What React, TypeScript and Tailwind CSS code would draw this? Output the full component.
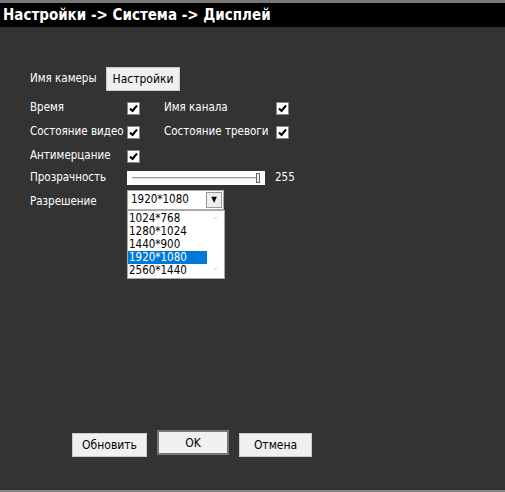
const Check = () => (
  <span className="flex h-[13px] w-[13px] items-center justify-center border border-[#888] bg-white">
    <svg width="9" height="9" viewBox="0 0 9 9">
      <path d="M1 4.5 L3.5 7 L8 1.5" stroke="#000" strokeWidth="2" fill="none" />
    </svg>
  </span>
);

const Btn = ({ label, w, strong }: { label: string; w: string; strong?: boolean }) => (
  <button
    className={`flex ${strong ? "h-[25px] -mt-[3px]" : "h-[24px]"} ${w} items-center justify-center bg-[#f0f0f0] text-[12px] text-black ${strong ? "border-2 border-[#777]" : "border border-[#ccc]"}`}
  >
    {label}
  </button>
);

export default function App() {
  const items = ["1024*768", "1280*1024", "1440*900", "1920*1080", "2560*1440"];
  return (
    <div
      className="relative flex h-[492px] w-[505px] flex-col bg-[#333] text-[11.5px] text-white"
      style={{ fontFamily: '"DejaVu Sans Condensed", "Liberation Sans", sans-serif' }}
    >
      <div className="h-[3px] bg-[#777]" />
      <div className="flex h-[24px] items-center bg-black px-[3px] text-[15px] font-bold">
        Настройки -&gt; Система -&gt; Дисплей
      </div>
      <div className="flex-1 border-b-2 border-[#888] pl-[30px] pt-[40px]">
        <div className="flex h-[24px] items-center">
          <span className="w-[76px]">Имя камеры</span>
          <Btn label="Настройки" w="w-[74px]" />
        </div>
        <div className="mt-[10px] flex h-[14px] items-center">
          <span className="w-[97px]">Время</span>
          <Check />
          <span className="ml-[24px] w-[112px]">Имя канала</span>
          <Check />
        </div>
        <div className="mt-[10px] flex h-[14px] items-center">
          <span className="w-[97px]">Состояние видео</span>
          <Check />
          <span className="ml-[24px] w-[112px]">Состояние тревоги</span>
          <Check />
        </div>
        <div className="mt-[10px] flex h-[14px] items-center">
          <span className="w-[97px]">Антимерцание</span>
          <Check />
        </div>
        <div className="mt-[8px] flex h-[14px] items-center">
          <span className="w-[97px]">Прозрачность</span>
          <div className="relative flex h-[14px] w-[138px] items-center bg-white px-[5px]">
            <div className="h-[2px] flex-1 border-t border-[#999] bg-[#ddd]" />
            <div className="h-[10px] w-[4px] border border-[#666] bg-[#eee]" />
          </div>
          <span className="ml-[10px]">255</span>
        </div>
        <div className="mt-[5px] flex items-start">
          <span className="mt-[3px] w-[97px]">Разрешение</span>
          <div className="relative">
            <div className="flex h-[20px] w-[97px] items-center justify-between border border-[#aaa] bg-white pl-[3px] text-black">
              <span>1920*1080</span>
              <span className="mr-[1px] flex h-[16px] w-[16px] items-center justify-center border border-[#999] bg-[#eee] text-[8px]">▼</span>
            </div>
            <div className="absolute left-0 top-[20px] flex w-[98px] border border-[#aaa] bg-white text-black">
              <div className="flex-1 py-[1px]">
                {items.map((it) => (
                  <div
                    key={it}
                    className={`h-[13px] pl-[1px] leading-[13px] ${it === "1920*1080" ? "bg-[#0078d7] text-white" : ""}`}
                  >
                    {it}
                  </div>
                ))}
              </div>
              <div className="flex w-[17px] flex-col items-center justify-between py-[4px] text-[8px] text-[#ccc]">
                <span>⌃</span>
                <span>⌄</span>
              </div>
            </div>
          </div>
        </div>
        <div className="ml-[42px] mt-[223px] flex items-start gap-[10px]">
          <Btn label="Обновить" w="w-[75px]" />
          <Btn label="OK" w="w-[72px]" strong />
          <Btn label="Отмена" w="w-[73px]" />
        </div>
      </div>
    </div>
  );
}
